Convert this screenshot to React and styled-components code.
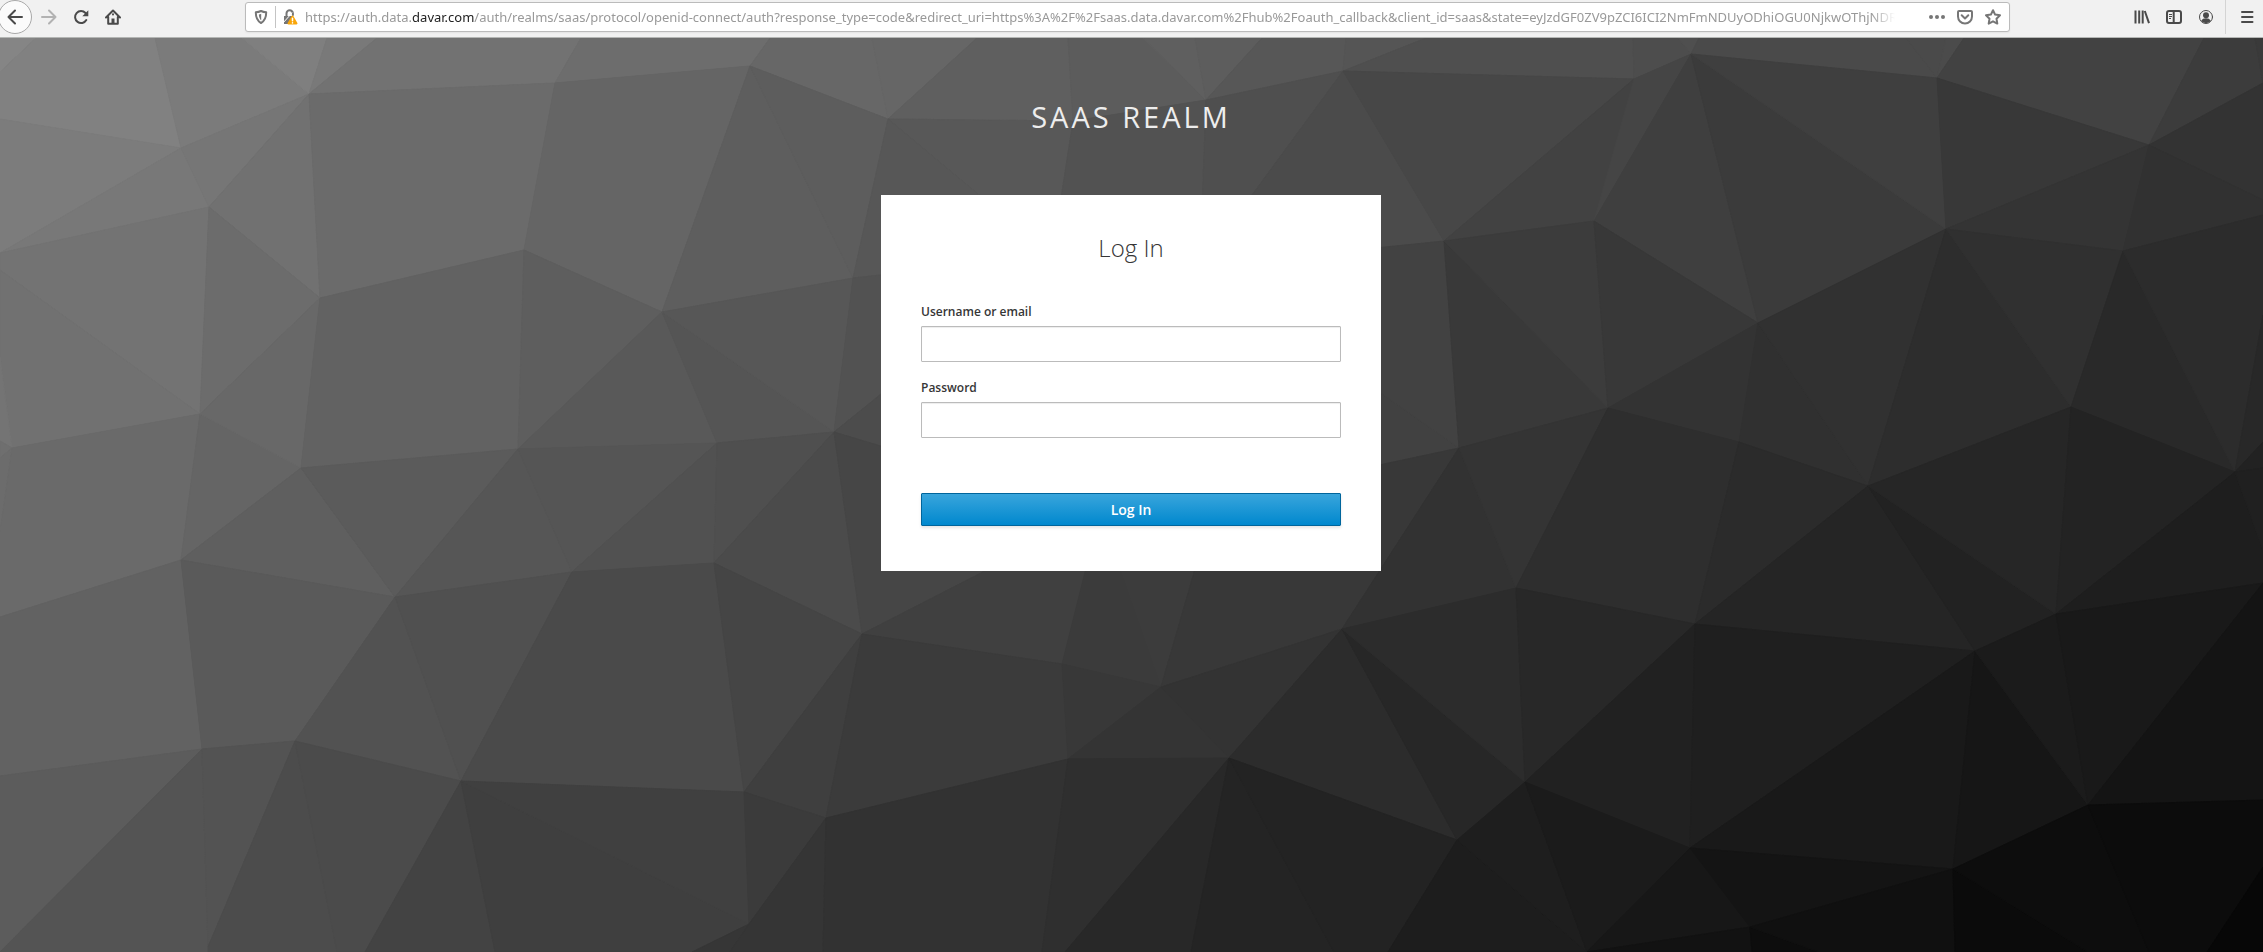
import React from "react";
import styled, { createGlobalStyle } from "styled-components";

const GlobalStyle = createGlobalStyle`
  *, *::before, *::after { box-sizing: border-box; }
  html, body { margin: 0; padding: 0; }
  body { font-family: "Open Sans", "Noto Sans", sans-serif; }
`;

const Window = styled.div`
  display: flex;
  flex-direction: column;
  min-height: 100vh;
`;

const Toolbar = styled.header`
  display: flex;
  align-items: center;
  height: 38px;
  padding-bottom: 3px;
  background: #f1f1f1;
  border-bottom: 1px solid #b4b6b4;
  color: #4a4a4a;
`;

const NavGroup = styled.nav`
  display: flex;
  align-items: center;
`;

const ToolButton = styled.button`
  display: flex;
  align-items: center;
  justify-content: center;
  width: 32px;
  height: 32px;
  padding: 0;
  border: 0;
  background: transparent;
  color: ${(p) => (p.$dim ? "#b2b2b2" : "#4a4a4a")};
  svg { display: block; }
`;

const BackButton = styled(ToolButton)`
  margin-left: -2px;
  margin-right: 1px;
  height: 34px;
  width: 34px;
  border: 1px solid #a9a9a9;
  border-radius: 50%;
  background: #fbfbfb;
`;

const AddressBar = styled.div`
  flex: 1;
  min-width: 0;
  display: flex;
  align-items: center;
  height: 30px;
  margin-left: 116px;
  margin-right: 116px;
  padding: 0 2px 0 1px;
  border: 1px solid #bbb;
  border-radius: 3px;
  background: #fff;
  box-shadow: 0 1px 2px rgba(0, 0, 0, 0.06);
`;

const BarButton = styled.button`
  display: flex;
  align-items: center;
  justify-content: center;
  width: 28px;
  height: 28px;
  padding: 0;
  border: 0;
  background: transparent;
  color: #767676;
`;

const Divider = styled.span`
  width: 1px;
  height: 22px;
  background: #c4c4c4;
`;

const MenuDivider = styled(Divider)`
  height: 34px;
  margin: 0 5px 0 3px;
  background: #d4d4d4;
`;

const Url = styled.div`
  flex: 1;
  min-width: 0;
  margin-left: 1px;
  margin-right: 28px;
  overflow: hidden;
  white-space: nowrap;
  font-family: "Noto Sans", "Open Sans", sans-serif;
  font-size: 13px;
  line-height: 20px;
  color: #999;
  mask-image: linear-gradient(to left, transparent, #000 24px);
  b { font-weight: 400; color: #222; }
`;

const Page = styled.main`
  position: relative;
  flex: 1;
  display: flex;
  flex-direction: column;
  align-items: center;
  gap: 61px;
  padding: 61px 21px 40px 20px;
  background: #3b3b3b;
`;

const Backdrop = styled.svg`
  position: absolute;
  inset: 0;
  width: 100%;
  height: 100%;
`;

const RealmTitle = styled.h1`
  position: relative;
  margin: 0;
  font-size: 29px;
  line-height: 35px;
  font-weight: 400;
  letter-spacing: 3px;
  text-transform: uppercase;
  color: #ededed;
`;

const Card = styled.section`
  position: relative;
  width: 100%;
  max-width: 500px;
  padding: 40px 40px 45px;
  background: #fff;
`;

const CardTitle = styled.h2`
  margin: 0 0 41px;
  font-size: 24px;
  line-height: 26px;
  font-weight: 300;
  text-align: center;
  color: #363636;
`;

const Form = styled.form`
  display: flex;
  flex-direction: column;
  gap: 16px;
`;

const Field = styled.div`
  display: flex;
  flex-direction: column;
  gap: 4px;
`;

const Label = styled.label`
  font-size: 12px;
  line-height: 20px;
  font-weight: 600;
  color: #363636;
`;

const TextInput = styled.input`
  width: 100%;
  height: 36px;
  padding: 6px 10px;
  border: 1px solid #bbb;
  border-radius: 1px;
  background: #fff;
  box-shadow: inset 0 1px 1px rgba(3, 3, 3, 0.075);
  font: 400 14px/22px "Open Sans", sans-serif;
  color: #363636;
`;

const SubmitButton = styled.button`
  height: 33px;
  margin-top: 39px;
  padding: 0;
  border: 1px solid #00659c;
  border-radius: 1px;
  background: linear-gradient(to bottom, #39a5dc 0%, #0088ce 100%);
  box-shadow: 0 2px 3px rgba(3, 3, 3, 0.1);
  font: 600 14px/22px "Open Sans", sans-serif;
  color: #fff;
`;

/* Corners of the backdrop's facets. */
const P = {
  TL: [0, 38], t1: [36, 38], t2: [155, 38], t3: [242, 38], t4: [327, 38], t5: [377, 38], t6: [581, 38],
  t7: [770, 38], t8: [872, 38], t9: [977, 38], t10: [1068, 38], t11: [1143, 38], t12: [1195, 38],
  t13: [1262, 38], t14: [1346, 38], t15: [1426, 38], t16: [1633, 38], t17: [1678, 38], t18: [1699, 38],
  t19: [1906, 38], t20: [1946, 38], t21: [1964, 38], t22: [2204, 38], t23: [2255, 38], TR: [2263, 38],
  l1: [0, 72], l2: [0, 119], l3: [0, 253], l4: [0, 270], l5: [0, 357], l6: [0, 441], l7: [0, 458],
  l8: [0, 532], l9: [0, 617], l10: [0, 776], BL: [0, 952],
  b1: [208, 952], b2: [337, 952], b3: [365, 952], b4: [495, 952], b5: [692, 952], b6: [730, 952],
  b7: [823, 952], b8: [1042, 952], b9: [1065, 952], b10: [1191, 952], b11: [1334, 952], b12: [1388, 952],
  b13: [1752, 952], b14: [1819, 952], b15: [1955, 952], b16: [2088, 952], b17: [2149, 952],
  b18: [2207, 952], BR: [2263, 952],
  r1: [2263, 83], r2: [2263, 200], r3: [2263, 215], r4: [2263, 315], r5: [2263, 442], r6: [2263, 468],
  r7: [2263, 550], r8: [2263, 583], r9: [2263, 800], r10: [2263, 867],
  1: [309, 94], 2: [181, 148], 3: [209, 207], 4: [555, 83], 5: [750, 66], 6: [320, 298], 7: [524, 250],
  8: [662, 312], 9: [200, 414], 10: [12, 448], 11: [301, 468], 12: [518, 449], 13: [717, 443],
  14: [181, 560], 15: [395, 597], 16: [572, 572], 17: [714, 563], 18: [202, 749], 19: [295, 741],
  20: [461, 781], 21: [744, 792], 22: [862, 634], 23: [208, 947], 24: [749, 924], 25: [1062, 664],
  26: [1161, 687], 27: [1342, 629], 28: [1068, 759], 29: [1229, 758], 30: [1457, 840], 31: [826, 818],
  32: [1516, 588], 33: [834, 432], 34: [1459, 448], 35: [1525, 782], 36: [1695, 624], 37: [1975, 651],
  38: [2056, 614], 39: [1690, 848], 40: [2088, 805], 41: [1953, 869], 42: [1750, 927], 43: [1587, 952],
  44: [1868, 486], 45: [2235, 472], 46: [2071, 407], 47: [1739, 442], 48: [1691, 54], 49: [1634, 79],
  50: [1937, 78], 51: [2149, 145], 52: [1946, 229], 53: [2123, 251], 54: [1758, 323], 55: [1594, 221],
  56: [1444, 241], 57: [1608, 408], 58: [1343, 71], 59: [888, 119], 60: [1073, 121], 61: [1206, 100],
  62: [853, 278], M1: [1052, 256], M3: [1200, 266], M4: [1215, 500], M5: [1100, 512],
};

/* Each facet: its grey level in hex, then its corners. */
const FACETS = `
85 TL t1 l1|81 t1 t2 2 l2 l1|7b t2 t3 1 2|7f t3 t4 1|79 t4 t5 1|72 t5 t6 4 1|6d t6 t7 5 4
67 t7 t8 59 5|66 t8 t9 59|5f t9 t10 60 59|5c t10 t11 61 60|5f t11 t12 61|5d t12 t13 61
57 t13 t14 58 61|55 t14 t15 58|4f t15 t16 49 58|4d t16 t17 48 49|4f t17 t18 48|4a t18 t19 50 48
4a t19 t20 50|4b t20 t21 50|42 t21 t22 51 50|3c t22 t23 r1 51|3a t23 TR r1
7c l2 2 l3|78 l3 2 3|76 1 2 3|73 l3 3 9 l4|71 l4 9 10 l5|71 1 3 6|6c 3 6 9|6b 1 4 7 6
65 4 5 8 7|5e 5 62 8|5d 5 59 62|58 59 60 M1|57 59 M1 62|52 60 61 M3 M1|4f 61 58 M3|4b 58 56 M3
47 58 49 56|42 49 55 56|45 49 48 55|3f 48 54 55|3b 48 52 54|3f 48 50 52|38 50 51 52|34 51 53 52
33 51 r1 r2|31 51 r2 r3 53
74 l5 10 l6|6f l6 10 l7|6c l7 10 l8|6a 10 9 14 l9 l8|65 9 11 14|68 9 6 11|62 6 7 12 11
5e 7 8 12|59 8 12 13|55 8 13 33|57 8 62 33|52 62 M1 33|4c 33 M1 M5|48 M1 M5 M3|44 M3 M5 M4
41 M3 M4 34|42 M3 34 56|39 56 34 57|3c 56 57 55|38 55 57 54|33 54 57 47|30 54 47 44|31 54 44 52
2d 52 44 46|30 52 46 53|29 53 46 45|2c 53 45 r4 r3|28 45 r4 r5|22 45 r5 r6
5f 11 14 15|5b 11 12 15|56 12 15 16|55 12 13 16|51 13 16 17|4f 13 33 17|4b 33 17 22|46 33 22 M5
40 22 25 M5|3b 25 26 M5|3c 26 M5 M4|38 26 27 34 M4|32 27 34 32|34 34 57 32|2e 57 47 36 32
2b 47 44 36|25 44 36 37|22 44 37 38|26 44 46 38|23 46 45 38|1e 45 38 r8 r7|20 45 r6 r7
62 l9 14 18 l10|5a 14 15 19 18|52 15 19 20|50 15 16 20|4a 16 17 21 20|45 17 22 21|3f 22 21 31
3b 22 25 28 31|38 25 26 28|34 26 28 29|33 26 27 29|2c 27 29 30|27 27 30 35|2c 27 32 35
28 32 36 35|21 36 35 39|1f 36 37 39|19 37 39 41|16 37 41 40|1b 37 38 40|19 38 r8 40|14 r8 r9 40
5c l10 18 BL|54 18 23 b1 BL|53 18 19 23|4c 19 23 b1 b2|4b 19 b2 b3 20|43 20 b3 b4|3f 20 b4 b5 24
40 20 24 21|3b 21 24 31|36 24 b5 b6|35 24 b6 b7 31|32 31 28 b8 b7|2f 28 29 b9 b8|28 29 b9 b10
24 29 b10 b11|23 29 b11 b12 30|1d 30 b12 43|1e 30 35 43|1b 35 39 43|17 39 43 42|14 39 41 42
12 42 43 b13|0d 42 b13 b14|10 42 b14 b15 41|0b 41 b15 b16|0d 41 b16 b17 40|0c 40 b17 b18 r10 r9
07 b18 BR r10`
  .trim()
  .split(/[|\n]/)
  .map((entry) => {
    const [grey, ...corners] = entry.trim().split(" ");
    return { fill: `#${grey}${grey}${grey}`, points: corners.map((c) => P[c].join(",")).join(" ") };
  });

const Facets = () => (
  <Backdrop viewBox="0 38 2263 914" preserveAspectRatio="xMidYMid slice" aria-hidden="true">
    {FACETS.map((f, i) => (
      <polygon key={i} points={f.points} fill={f.fill} stroke={f.fill} strokeWidth="1" strokeLinejoin="round" />
    ))}
  </Backdrop>
);

const Icon = ({ children, size = 16 }) => (
  <svg width={size} height={size} viewBox="0 0 16 16" fill="none" stroke="currentColor" strokeWidth="2"
    strokeLinecap="round" strokeLinejoin="round" aria-hidden="true">
    {children}
  </svg>
);

const BackIcon = () => <Icon><path d="M15 8H1.5M8 1.5 1.5 8 8 14.5" /></Icon>;
const ForwardIcon = () => <Icon><path d="M1 8h13.5M8 1.5 14.5 8 8 14.5" /></Icon>;
const ReloadIcon = () => (
  <Icon>
    <path d="M13.3 11A6 6 0 1 1 12.500 4" />
    <path d="M15.3 1.2v6h-6z" fill="currentColor" stroke="none" />
  </Icon>
);
const HomeIcon = () => (
  <Icon>
    <path d="M1 8.5 8 1.5l7 7M3.2 8v6.8h9.6V8" />
    <path d="M6.5 15V9.5h3V15z" fill="currentColor" stroke="none" />
    <path d="M8 5.2v.3" />
  </Icon>
);
const ShieldIcon = () => (
  <Icon>
    <path d="M8 2c1.800.9 3.400 1.200 5.200 1.300 0 4.700-.8 8.300-5.200 10.700C3.600 11.600 2.800 8 2.800 3.300 4.600 3.200 6.200 2.900 8 2z" />
    <path d="M8.200 4.800v6.600C6.600 10 6 8.200 5.800 5.600c.9-.1 1.600-.4 2.400-.8z" fill="currentColor" stroke="none" />
  </Icon>
);
const LockIcon = () => (
  <Icon>
    <path d="M4.5 7V4.5a3.2 3.2 0 0 1 6.400 0V6" />
    <path d="M2 7h8v8H2z" fill="currentColor" stroke="none" />
    <path d="M1 14 10 4" stroke="#fff" strokeWidth="1" />
    <path d="M10.5 7.500 14.500 14.500h-8z" fill="#f9a60a" stroke="#f9a60a" />
    <path d="M10.500 9.300v2.500M10.500 13.800v.1" stroke="#fff" strokeWidth="1.500" />
  </Icon>
);
const DotsIcon = () => (
  <Icon>
    <g fill="currentColor" stroke="none">
      <circle cx="2" cy="8" r="2" /><circle cx="8" cy="8" r="2" /><circle cx="14" cy="8" r="2" />
    </g>
  </Icon>
);
const PocketIcon = () => (
  <Icon><path d="M2 2h12a1 1 0 0 1 1 1v4.500a7 7 0 0 1-14 0V3a1 1 0 0 1 1-1zM4.700 6.300 8 9.500l3.300-3.200" /></Icon>
);
const StarIcon = () => (
  <Icon><path d="m8 1.200 2.100 4.400 4.900.7-3.500 3.400.8 4.900L8 12.300l-4.300 2.300.8-4.900L1 6.300l4.900-.7z" /></Icon>
);
const LibraryIcon = () => (
  <Icon><path d="M1.500 1.500v13M5.200 1.500v13M8.700 1.500v13M10.800 2l4.200 12.200" strokeLinecap="butt" /></Icon>
);
const SidebarIcon = () => (
  <Icon>
    <rect x="1" y="2" width="14" height="12" rx="2" />
    <path d="M7.700 2v12" />
    <path d="M3 5.500h3M3 7.500h3M3 9.500h2" strokeWidth="1" strokeLinecap="butt" />
  </Icon>
);
const AccountIcon = () => (
  <Icon>
    <circle cx="8" cy="8" r="6.500" strokeWidth="1" />
    <circle cx="8" cy="6.300" r="3" fill="currentColor" stroke="none" />
    <path d="M3.200 12c1-2 2.600-2.700 4.800-2.700s3.800.7 4.800 2.700A6 6 0 0 1 8 14a6 6 0 0 1-4.800-2z" fill="currentColor" stroke="none" />
  </Icon>
);
const MenuIcon = () => <Icon><path d="M3 3h10.500M3 8h10.500M3 13h10.500" /></Icon>;

export default function App() {
  return (
    <Window>
      <GlobalStyle />
      <Toolbar>
        <NavGroup aria-label="Browser navigation">
          <BackButton type="button" aria-label="Back"><BackIcon /></BackButton>
          <ToolButton type="button" aria-label="Forward" $dim><ForwardIcon /></ToolButton>
          <ToolButton type="button" aria-label="Reload"><ReloadIcon /></ToolButton>
          <ToolButton type="button" aria-label="Home"><HomeIcon /></ToolButton>
        </NavGroup>
        <AddressBar>
          <BarButton type="button" aria-label="Tracking protection"><ShieldIcon /></BarButton>
          <Divider />
          <BarButton type="button" aria-label="Connection details"><LockIcon /></BarButton>
          <Url role="textbox" aria-label="Address" tabIndex={0}>
            https://auth.data.<b>davar.com</b>/auth/realms/saas/protocol/openid-connect/auth?response_type=code&amp;redirect_uri=https%3A%2F%2Fsaas.data.davar.com%2Fhub%2Foauth_callback&amp;client_id=saas&amp;state=eyJzdGF0ZV9pZCI6ICI2NmFmNDUyODhiOGU0NjkwOThjNDR
          </Url>
          <BarButton type="button" aria-label="Page actions"><DotsIcon /></BarButton>
          <BarButton type="button" aria-label="Save to Pocket"><PocketIcon /></BarButton>
          <BarButton type="button" aria-label="Bookmark"><StarIcon /></BarButton>
        </AddressBar>
        <NavGroup aria-label="Browser tools">
          <ToolButton type="button" aria-label="Library"><LibraryIcon /></ToolButton>
          <ToolButton type="button" aria-label="Sidebar"><SidebarIcon /></ToolButton>
          <ToolButton type="button" aria-label="Account"><AccountIcon /></ToolButton>
          <MenuDivider />
          <ToolButton type="button" aria-label="Menu"><MenuIcon /></ToolButton>
        </NavGroup>
      </Toolbar>
      <Page>
        <Facets />
        <RealmTitle>Saas Realm</RealmTitle>
        <Card>
          <CardTitle>Log In</CardTitle>
          <Form>
            <Field>
              <Label htmlFor="username">Username or email</Label>
              <TextInput id="username" name="username" type="text" />
            </Field>
            <Field>
              <Label htmlFor="password">Password</Label>
              <TextInput id="password" name="password" type="password" />
            </Field>
            <SubmitButton type="button">Log In</SubmitButton>
          </Form>
        </Card>
      </Page>
    </Window>
  );
}
